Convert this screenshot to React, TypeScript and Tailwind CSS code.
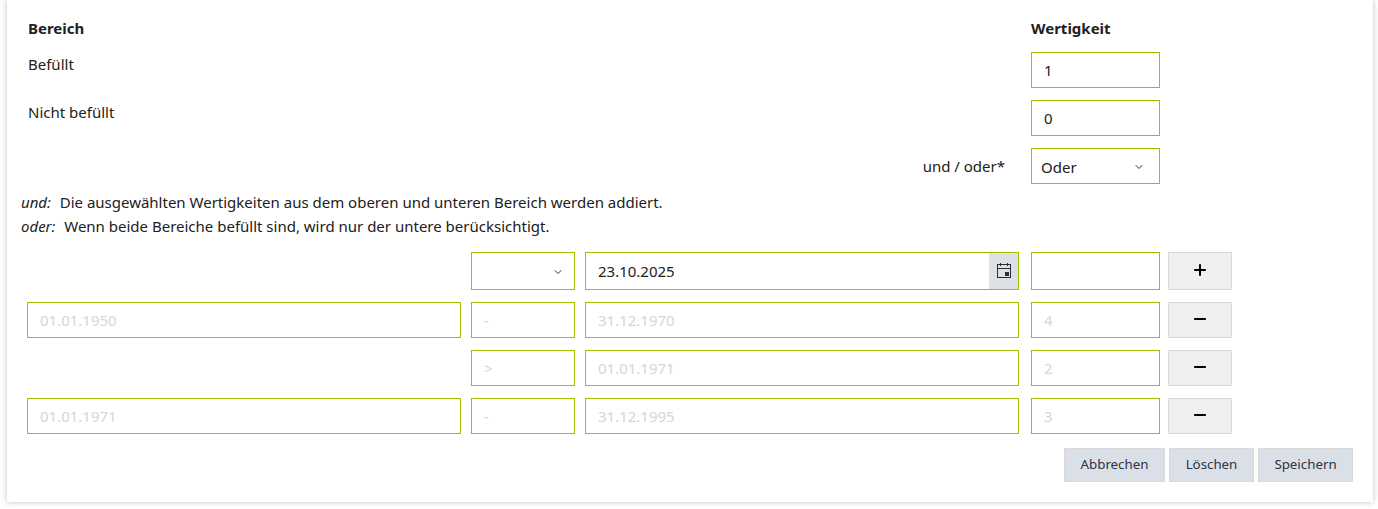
import React from 'react';
import { ChevronDown, Minus, Plus } from 'lucide-react';

const fieldClass =
  'h-full w-full border border-[#9fc000] bg-white px-3 text-[15px] text-[#212121] outline-none';

const Field: React.FC<{ value?: string; muted?: boolean; className?: string }> = ({ value, muted, className }) => (
  <input
    readOnly
    value={value ?? ''}
    className={`${fieldClass} ${muted ? 'text-[#d6d6d6]' : ''} ${className ?? ''}`}
  />
);

const CalendarIcon = () => (
  <svg width="16" height="16" viewBox="0 0 16 16" fill="none" stroke="#2b2f36" strokeWidth="1" shapeRendering="crispEdges">
    <rect x="1.5" y="1.5" width="13" height="13" />
    <path d="M1.5 5.5h13M4.5 0v3M11.5 0v3" />
    <rect x="9" y="9" width="4" height="4" fill="#2b2f36" stroke="none" />
  </svg>
);

const RowButton: React.FC<{ add?: boolean }> = ({ add }) => (
  <button className="flex h-full w-16 items-center justify-center border border-[#d9d9d9] bg-[#efefef] pb-0.5 text-black">
    {add ? <Plus size={20} strokeWidth={2.4} strokeLinecap="butt" /> : <Minus size={20} strokeWidth={2.4} strokeLinecap="butt" />}
  </button>
);

const FormRow: React.FC<{ from?: string; op: string; to: string; points: string }> = ({ from, op, to, points }) => (
  <div className="flex h-9">
    <div className="w-[434px]">{from && <Field value={from} muted />}</div>
    <div className="ml-2.5 w-[104px]"><Field value={op} muted /></div>
    <div className="ml-2.5 w-[434px]"><Field value={to} muted /></div>
    <div className="ml-3 w-[129px]"><Field value={points} muted /></div>
    <div className="ml-2"><RowButton /></div>
  </div>
);

const ActionButton: React.FC<{ label: string; width: string }> = ({ label, width }) => (
  <button className={`h-[34px] ${width} border border-[#d9d9d9] bg-[#dbe0e8] text-[13.3px] text-[#2b3340]`}>{label}</button>
);

export default function App() {
  return (
    <div className="h-[509px] w-[1378px] overflow-hidden bg-white font-['Noto_Sans','Open_Sans',sans-serif] text-[15px] text-[#212121]">
      <div className="ml-[7px] h-[502px] w-[1366px] bg-white pl-5 pt-[18px] shadow-[0_0_6px_rgba(0,0,0,0.25)]">
        {/* Wertigkeit table */}
        <div className="flex h-5 items-center justify-between pl-px pr-[213px] font-bold">
          <span>Bereich</span>
          <span className="w-[129px]">Wertigkeit</span>
        </div>

        <div className="mt-3.5 flex h-9 justify-between pl-px pr-[213px]">
          <span className="mt-px">Befüllt</span>
          <div className="w-[129px]"><Field value="1" /></div>
        </div>
        <div className="mt-3 flex h-9 justify-between pl-px pr-[213px]">
          <span className="mt-px">Nicht befüllt</span>
          <div className="w-[129px]"><Field value="0" /></div>
        </div>
        <div className="mt-3 flex h-9 items-center justify-end pr-[213px]">
          <span className="mr-[26px]">und / oder*</span>
          <div className="relative h-full w-[129px]">
            <Field value="Oder" className="px-[9px] pt-px" />
            <ChevronDown size={12} strokeWidth={2} className="absolute right-[15px] top-[13px] text-[#333]" />
          </div>
        </div>

        {/* Hint */}
        <div className="-ml-[6px] mt-[6px] leading-6">
          <p><em className="mr-px">und:</em>&nbsp; Die ausgewählten Wertigkeiten aus dem oberen und unteren Bereich werden addiert.</p>
          <p><em className="mr-px">oder:</em>&nbsp; Wenn beide Bereiche befüllt sind, wird nur der untere berücksichtigt.</p>
        </div>

        {/* Date rows */}
        <div className="mt-3.5 flex h-[38px]">
          <div className="w-[434px]" />
          <div className="relative ml-2.5 w-[104px]">
            <Field />
            <ChevronDown size={12} strokeWidth={2} className="absolute right-[11px] top-[14px] text-[#333]" />
          </div>
          <div className="relative ml-2.5 w-[434px]">
            <Field value="23.10.2025" />
            <div className="absolute inset-y-px right-px flex w-[29px] items-center justify-center bg-[#dde1e6]">
              <CalendarIcon />
            </div>
          </div>
          <div className="ml-3 w-[129px]"><Field /></div>
          <div className="ml-2"><RowButton add /></div>
        </div>
        <div className="mt-3 flex flex-col gap-3">
          <FormRow from="01.01.1950" op="-" to="31.12.1970" points="4" />
          <FormRow op=">" to="01.01.1971" points="2" />
          <FormRow from="01.01.1971" op="-" to="31.12.1995" points="3" />
        </div>

        <div className="mt-3.5 flex justify-end gap-1 pr-5">
          <ActionButton label="Abbrechen" width="w-[101px]" />
          <ActionButton label="Löschen" width="w-[85px]" />
          <ActionButton label="Speichern" width="w-[95px]" />
        </div>
      </div>
    </div>
  );
}
